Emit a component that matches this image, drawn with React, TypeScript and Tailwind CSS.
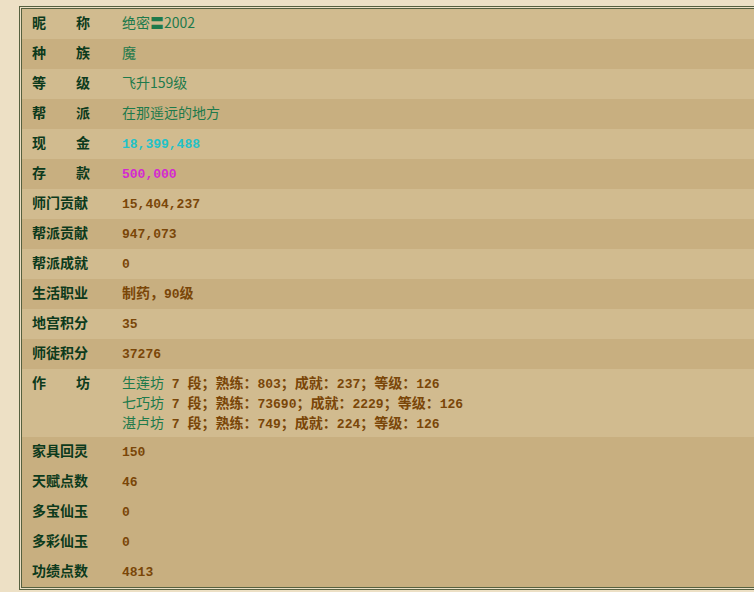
const labelFont = { fontFamily: '"Noto Sans CJK SC", "Noto Sans", sans-serif' };

type Row = { label: string; value: React.ReactNode; spread?: boolean };

const green = 'text-[#1e7a4c]';
const brown = 'text-[#7a4608] font-bold';

function Num({ children, color = brown }: { children: React.ReactNode; color?: string }) {
  return (
    <span className={`${color} text-[13px]`} style={{ fontFamily: '"Liberation Mono", monospace' }}>
      {children}
    </span>
  );
}

function Cn({ children, className = green }: { children: React.ReactNode; className?: string }) {
  return (
    <span className={`${className} text-[14px]`} style={labelFont}>
      {children}
    </span>
  );
}

function Workshop({ name, level, skill, done, grade }: { name: string; level: string; skill: string; done: string; grade: string }) {
  return (
    <div className="h-5 leading-[20px] whitespace-pre">
      <Cn>{name}</Cn>
      <Num> {level} </Num>
      <Cn className={brown}>段；熟练：</Cn>
      <Num>{skill}</Num>
      <Cn className={brown}>；成就：</Cn>
      <Num>{done}</Num>
      <Cn className={brown}>；等级：</Cn>
      <Num>{grade}</Num>
    </div>
  );
}

const rows: Row[] = [
  {
    label: '昵称',
    spread: true,
    value: (
      <Cn>
        绝密<span className="font-bold">〓</span>2002
      </Cn>
    ),
  },
  { label: '种族', spread: true, value: <Cn>魔</Cn> },
  { label: '等级', spread: true, value: <Cn>飞升159级</Cn> },
  { label: '帮派', spread: true, value: <Cn>在那遥远的地方</Cn> },
  { label: '现金', spread: true, value: <Num color="text-[#22c2c8] font-bold">18,399,488</Num> },
  { label: '存款', spread: true, value: <Num color="text-[#d42ad0] font-bold">500,000</Num> },
  { label: '师门贡献', value: <Num>15,404,237</Num> },
  { label: '帮派贡献', value: <Num>947,073</Num> },
  { label: '帮派成就', value: <Num>0</Num> },
  {
    label: '生活职业',
    value: (
      <>
        <Cn className={brown}>制药，</Cn>
        <Num>90</Num>
        <Cn className={brown}>级</Cn>
      </>
    ),
  },
  { label: '地宫积分', value: <Num>35</Num> },
  { label: '师徒积分', value: <Num>37276</Num> },
];

const tail: Row[] = [
  { label: '家具回灵', value: <Num>150</Num> },
  { label: '天赋点数', value: <Num>46</Num> },
  { label: '多宝仙玉', value: <Num>0</Num> },
  { label: '多彩仙玉', value: <Num>0</Num> },
  { label: '功绩点数', value: <Num>4813</Num> },
];

function Label({ text, spread }: { text: string; spread?: boolean }) {
  return (
    <div
      className={`w-[58px] flex ${spread ? 'justify-between' : ''} text-[14px] leading-[20px] font-bold text-[#0c3a1c]`}
      style={labelFont}
    >
      {text.split('').map((c, i) => (
        <span key={i}>{c}</span>
      ))}
    </div>
  );
}

export default function App() {
  return (
    <div className="w-[754px] h-[592px] overflow-hidden bg-[#ede0c5]">
      <div className="ml-[19px] mt-[6px] w-[800px] border border-[#56603f] p-px">
        <div className="border border-[#56603f]">
          {rows.map((r, i) => (
            <div
              key={r.label}
              className={`h-[30px] flex pt-[3px] ${i % 2 === 0 ? 'bg-[#d1bb8f]' : 'bg-[#c8af80]'}`}
            >
              <div className="w-[100px] pl-[10px]">
                <Label text={r.label} spread={r.spread} />
              </div>
              <div className="leading-[20px] whitespace-pre">{r.value}</div>
            </div>
          ))}

          {/* 作坊 */}
          <div className="flex bg-[#d1bb8f] pt-[3px] pb-[5px]">
            <div className="w-[100px] pl-[10px]">
              <Label text="作坊" spread />
            </div>
            <div>
              <Workshop name="生莲坊" level="7" skill="803" done="237" grade="126" />
              <Workshop name="七巧坊" level="7" skill="73690" done="2229" grade="126" />
              <Workshop name="湛卢坊" level="7" skill="749" done="224" grade="126" />
            </div>
          </div>

          {tail.map((r) => (
            <div key={r.label} className="h-[30px] flex pt-[3px] bg-[#c8af80]">
              <div className="w-[100px] pl-[10px]">
                <Label text={r.label} />
              </div>
              <div className="leading-[20px] whitespace-pre">{r.value}</div>
            </div>
          ))}
        </div>
      </div>
    </div>
  );
}
